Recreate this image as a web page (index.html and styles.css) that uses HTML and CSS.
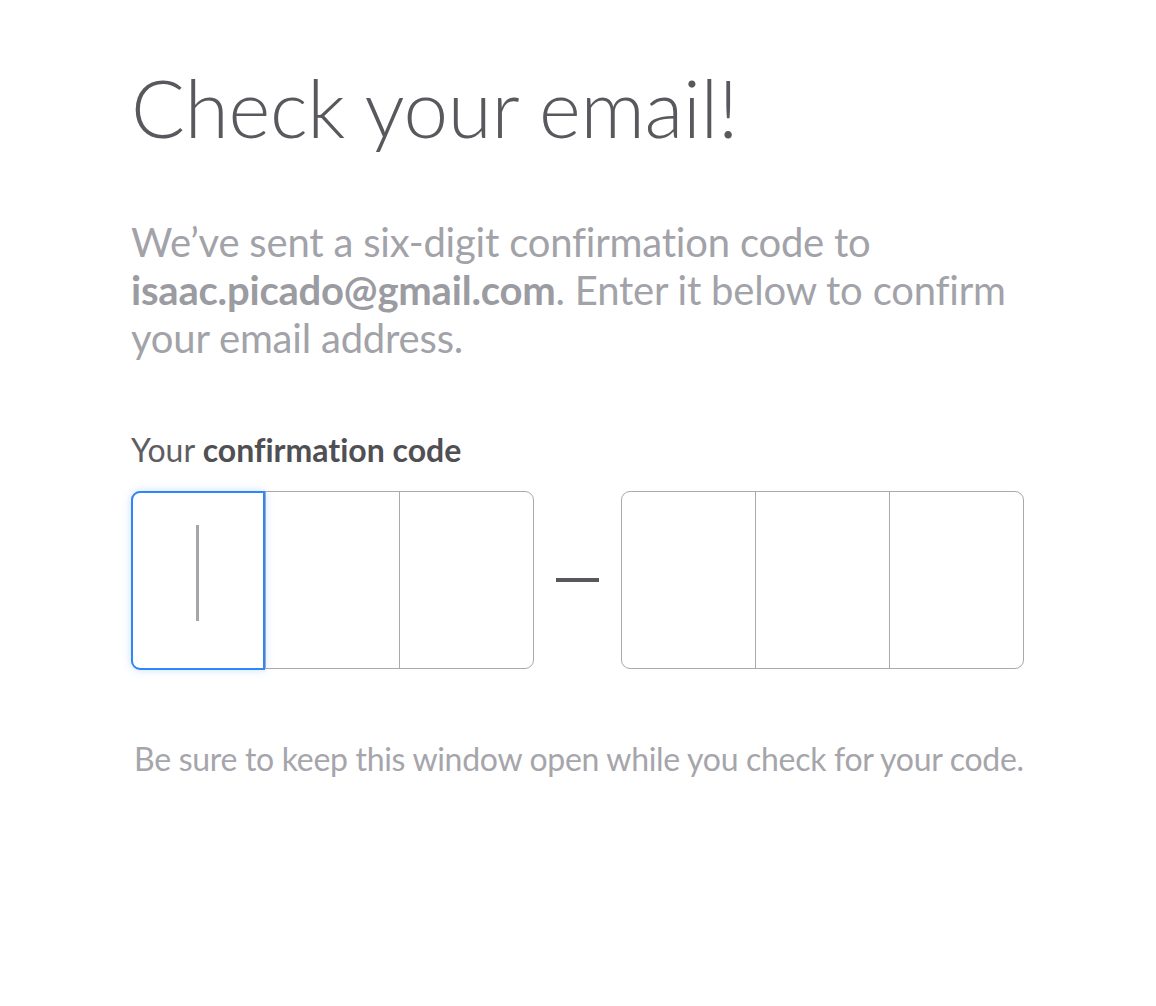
FILE: index.html
```html
<!DOCTYPE html>
<html lang="en">
<head>
<meta charset="utf-8">
<title>Check your email</title>
<link rel="stylesheet" href="styles.css">
</head>
<body>
<main class="page">
  <h1 class="title">Check your email!</h1>
  <p class="lead">We’ve sent a six-digit confirmation code to <strong>isaac.picado@gmail.com</strong>. Enter it below to confirm your email address.</p>
  <div class="label">Your <strong>confirmation code</strong></div>
  <div class="code">
    <div class="group">
      <div class="cell focused"><span class="caret"></span></div>
      <div class="cell"></div>
      <div class="cell"></div>
    </div>
    <div class="dash"></div>
    <div class="group">
      <div class="cell"></div>
      <div class="cell"></div>
      <div class="cell"></div>
    </div>
  </div>
  <p class="note">Be sure to keep this window open while you check for your code.</p>
</main>
</body>
</html>
```

FILE: styles.css
```css
html, body {
  margin: 0;
  padding: 0;
  background: #ffffff;
}

body {
  font-family: Lato, "Open Sans", "Liberation Sans", sans-serif;
  font-variant-ligatures: no-common-ligatures;
}

.page {
  padding: 52px 0 0 131px;
  width: 900px;
}

.title {
  margin: 0;
  font-weight: 300;
  font-size: 80px;
  line-height: 110px;
  color: #58585d;
  letter-spacing: -0.3px;
}

.lead {
  margin: 56px 0 0 0;
  font-size: 40px;
  line-height: 48px;
  color: #a2a2a9;
  max-width: 890px;
  letter-spacing: -0.2px;
}

.lead strong {
  font-weight: 700;
  color: #9b9ba2;
}

.label {
  margin-top: 70px;
  font-size: 32px;
  line-height: 36px;
  color: #5d5d62;
}

.label strong {
  color: #4f4f54;
  font-weight: 700;
}

.code {
  margin-top: 23px;
  display: flex;
  align-items: center;
}

.group {
  display: flex;
  border: 1.5px solid #a9a9ae;
  border-radius: 9px;
  height: 178px;
  width: 403px;
  box-sizing: border-box;
}

.cell {
  flex: 1;
  border-left: 1.5px solid #a9a9ae;
  display: flex;
  align-items: center;
  justify-content: center;
}

.cell:first-child {
  border-left: none;
}

.cell.focused {
  margin: -1.5px 0 -1.5px -1.5px;
  border: 2px solid #2f86fb;
  border-radius: 9px 0 0 9px;
  box-shadow: 0 0 8px rgba(47, 134, 251, 0.25);
  flex: 0 0 130px;
}

.caret {
  display: block;
  width: 3px;
  height: 96px;
  margin-bottom: 14px;
  background: #a6a6aa;
}

.dash {
  width: 43px;
  height: 4px;
  margin: 0 22px 0 22px;
  background: #58585c;
}

.note {
  margin: 72px 0 0 3px;
  font-size: 32px;
  line-height: 36px;
  color: #a5a5ab;
  letter-spacing: -0.3px;
}
```
